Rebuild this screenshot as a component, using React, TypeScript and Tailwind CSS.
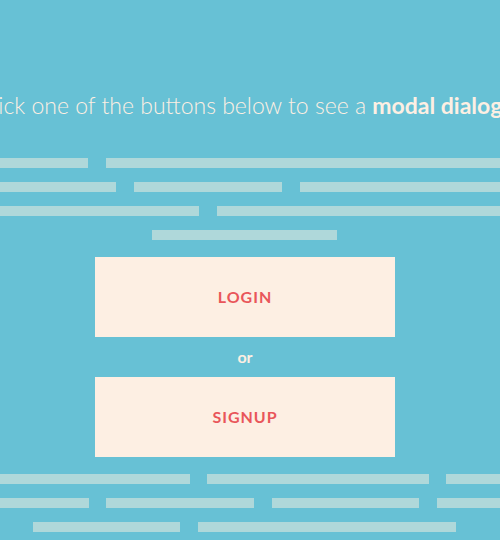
import React from "react";

const Bar = ({ w }: { w: string }) => <div className={`h-[10px] shrink-0 bg-[#afd8da] ${w}`} />;

export default function App() {
  return (
    <div className="w-[500px] h-[540px] overflow-hidden bg-[#67c1d5] font-['Lato','Liberation_Sans',sans-serif]">
      <div className="w-[490px]">
        <div className="pt-[92px] pr-[10px] flex justify-center whitespace-nowrap">
          <p className="text-[23px] font-light leading-[27px] text-[#fdefe3] shrink-0">
            Click one of the buttons below to see a <strong className="font-bold">modal dialog</strong>
          </p>
        </div>
        <div className="mt-[39px] flex flex-col gap-[14px]">
          <div className="flex gap-[18px]">
            <Bar w="w-[88px]" />
            <Bar w="w-[420px]" />
          </div>
          <div className="flex gap-[18px]">
            <Bar w="w-[116px]" />
            <Bar w="w-[148px]" />
            <Bar w="w-[220px]" />
          </div>
          <div className="flex gap-[18px]">
            <Bar w="w-[199px]" />
            <Bar w="w-[300px]" />
          </div>
          <div className="flex pl-[152px]">
            <Bar w="w-[185px]" />
          </div>
        </div>
        <div className="mt-[17px] flex flex-col items-center">
          <button className="w-[300px] h-[80px] bg-[#fdefe3] text-[#e9565a] text-[16px] font-bold tracking-[1px] leading-none">
            LOGIN
          </button>
          <div className="h-[40px] flex items-center justify-center text-[16px] font-bold text-[#fdefe3]">or</div>
          <button className="w-[300px] h-[80px] bg-[#fdefe3] text-[#e9565a] text-[16px] font-bold tracking-[1px] leading-none">
            SIGNUP
          </button>
        </div>
        <div className="mt-[17px] flex flex-col gap-[14px]">
          <div className="flex gap-[17px]">
            <Bar w="w-[190px]" />
            <Bar w="w-[222px]" />
            <Bar w="w-[80px]" />
          </div>
          <div className="flex">
            <Bar w="w-[89px]" />
            <div className="w-[17px] shrink-0" />
            <Bar w="w-[148px]" />
            <div className="w-[18px] shrink-0" />
            <Bar w="w-[147px]" />
            <div className="w-[18px] shrink-0" />
            <Bar w="w-[80px]" />
          </div>
          <div className="flex gap-[18px] pl-[33px]">
            <Bar w="w-[147px]" />
            <Bar w="w-[258px]" />
          </div>
        </div>
      </div>
    </div>
  );
}
